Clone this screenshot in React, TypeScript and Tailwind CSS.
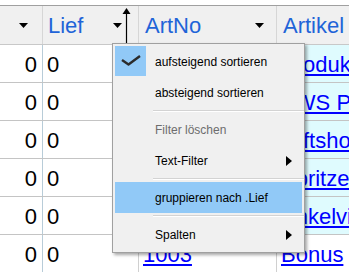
import React from "react";

type Row = { a: string; lief: string; artNo: string; artikel: string; tint: boolean };

const rows: Row[] = [
  {a: "0", lief: "0", artNo: "1001", artikel: "Produkte", tint: true},
  {a: "0", lief: "0", artNo: "1002", artikel: "AWS Premium", tint: true},
  {a: "0", lief: "0", artNo: "1004", artikel: "Giftshop", tint: true},
  {a: "0", lief: "0", artNo: "1005", artikel: "Spritze", tint: true},
  {a: "0", lief: "0", artNo: "1006", artikel: "Enkelvideo", tint: true},
  {a: "0", lief: "0", artNo: "1003", artikel: "Bonus", tint: false},
];

function DropTriangle(): React.JSX.Element {
  return (
    <svg width="9" height="5" viewBox="0 0 9 5" className="shrink-0" aria-hidden>
      <path d="M0 0 H9 L4.5 5 Z" fill="#000"/>
    </svg>
  );
}

function SubArrow(): React.JSX.Element {
  return (
    <svg width="6" height="10" viewBox="0 0 6 10" className="shrink-0" aria-hidden>
      <path d="M0 0 L6 5 L0 10 Z" fill="#000"/>
    </svg>
  );
}

function Separator(): React.JSX.Element {
  return (
    <div className="h-[6px] pl-[40px] pt-[2px]">
      <div className="border-t border-b border-t-[#d3d3d3] border-b-white"/>
    </div>
  );
}

function MenuItem(props: {
  children: React.ReactNode;
  checked?: boolean;
  active?: boolean;
  disabled?: boolean;
  submenu?: boolean;
}): React.JSX.Element {
  const bg = props.active ? "bg-[#91c9f7]" : "";
  const color = props.disabled ? "text-[#6d6d6d]" : "text-black";
  return (
    <div className={`relative mx-[2px] flex h-[31px] items-center pl-[40px] pr-[10px] ${bg} ${color}`}>
      {props.checked ? (
        <div className="absolute left-0 top-0 flex h-[30px] w-[31px] items-center justify-center bg-[#91c9f7]">
          <svg width="20" height="12" viewBox="0 0 20 12" aria-hidden>
            <path d="M1 5 L7.5 9.5 L19 1" fill="none" stroke="#2b2b2b" strokeWidth="2.4" strokeLinejoin="round"/>
          </svg>
        </div>
      ) : null}
      <span className="flex-1 pt-[1px]">{props.children}</span>
      {props.submenu ? <SubArrow/> : null}
    </div>
  );
}

export default function App(): React.JSX.Element {
  return (
    <div className="relative h-[272px] w-[349px] overflow-hidden bg-white font-['Liberation_Sans',Arial,sans-serif]">
      <div className="h-[5px]"/>

      {/* Kopfzeile */}
      <div className="flex h-[40px] border-t border-b border-t-[#a0a0a0] border-b-[#c8c8c8] bg-[#f0f0f0] text-[22px] text-[#1f64d8]">
        <div className="flex w-[43px] shrink-0 items-center justify-end border-r border-[#d6d6d6] pr-[14px]">
          <DropTriangle/>
        </div>
        <div className="flex w-[96px] shrink-0 items-center border-r border-[#d6d6d6] pl-[5px] pr-[16px]">
          <span className="flex-1 pt-[1px]">Lief</span>
          <DropTriangle/>
        </div>
        <div className="flex w-[138px] shrink-0 items-center border-r border-[#d6d6d6] pl-[6px] pr-[12px]">
          <span className="flex-1 pt-[1px]">ArtNo</span>
          <DropTriangle/>
        </div>
        <div className="flex flex-1 items-center pl-[6px]">
          <span className="pt-[1px]">Artikel</span>
        </div>
      </div>

      {/* Datenzeilen */}
      {rows.map((r, i) => (
        <div key={i} className="flex h-[38px] border-b border-[#c4c4c4] text-[22px]">
          <div className="flex w-[43px] shrink-0 items-center justify-end border-r border-[#b8ccd8] pr-[5px] pt-[2px]">
            {r.a}
          </div>
          <div className="flex w-[96px] shrink-0 items-center border-r border-[#d0d0d0] pl-[4px] pt-[2px]">
            {r.lief}
          </div>
          <div className="flex w-[138px] shrink-0 items-center border-r border-[#d0d0d0] pl-[4px] pt-[2px]">
            <span className="text-[#0000ff] underline">{r.artNo}</span>
          </div>
          <div className={`flex flex-1 items-center whitespace-nowrap pl-[4px] pt-[2px] ${r.tint ? "bg-[#dffbfe]" : ""}`}>
            <span className="text-[#0000ff] underline">{r.artikel}</span>
          </div>
        </div>
      ))}

      {/* Sortierpfeil */}
      <svg className="absolute left-[122px] top-[8px]" width="9" height="38" viewBox="0 0 9 38" aria-hidden>
        <path d="M4.5 0 L8.5 6 H0.5 Z" fill="#000"/>
        <path d="M4.5 4 V38" stroke="#000" strokeWidth="1.2"/>
      </svg>

      {/* Kontextmenü */}
      <div className="absolute left-[112px] top-[43px] w-[193px] border border-[#a0a0a0] bg-[#f0f0f0] py-[2px] text-[12px] shadow-[2px_2px_3px_rgba(0,0,0,0.35)]">
        <MenuItem checked>aufsteigend sortieren</MenuItem>
        <MenuItem>absteigend sortieren</MenuItem>
        <Separator/>
        <MenuItem disabled>Filter löschen</MenuItem>
        <MenuItem submenu>Text-Filter</MenuItem>
        <Separator/>
        <MenuItem active>gruppieren nach .Lief</MenuItem>
        <Separator/>
        <MenuItem submenu>Spalten</MenuItem>
      </div>
    </div>
  );
}
